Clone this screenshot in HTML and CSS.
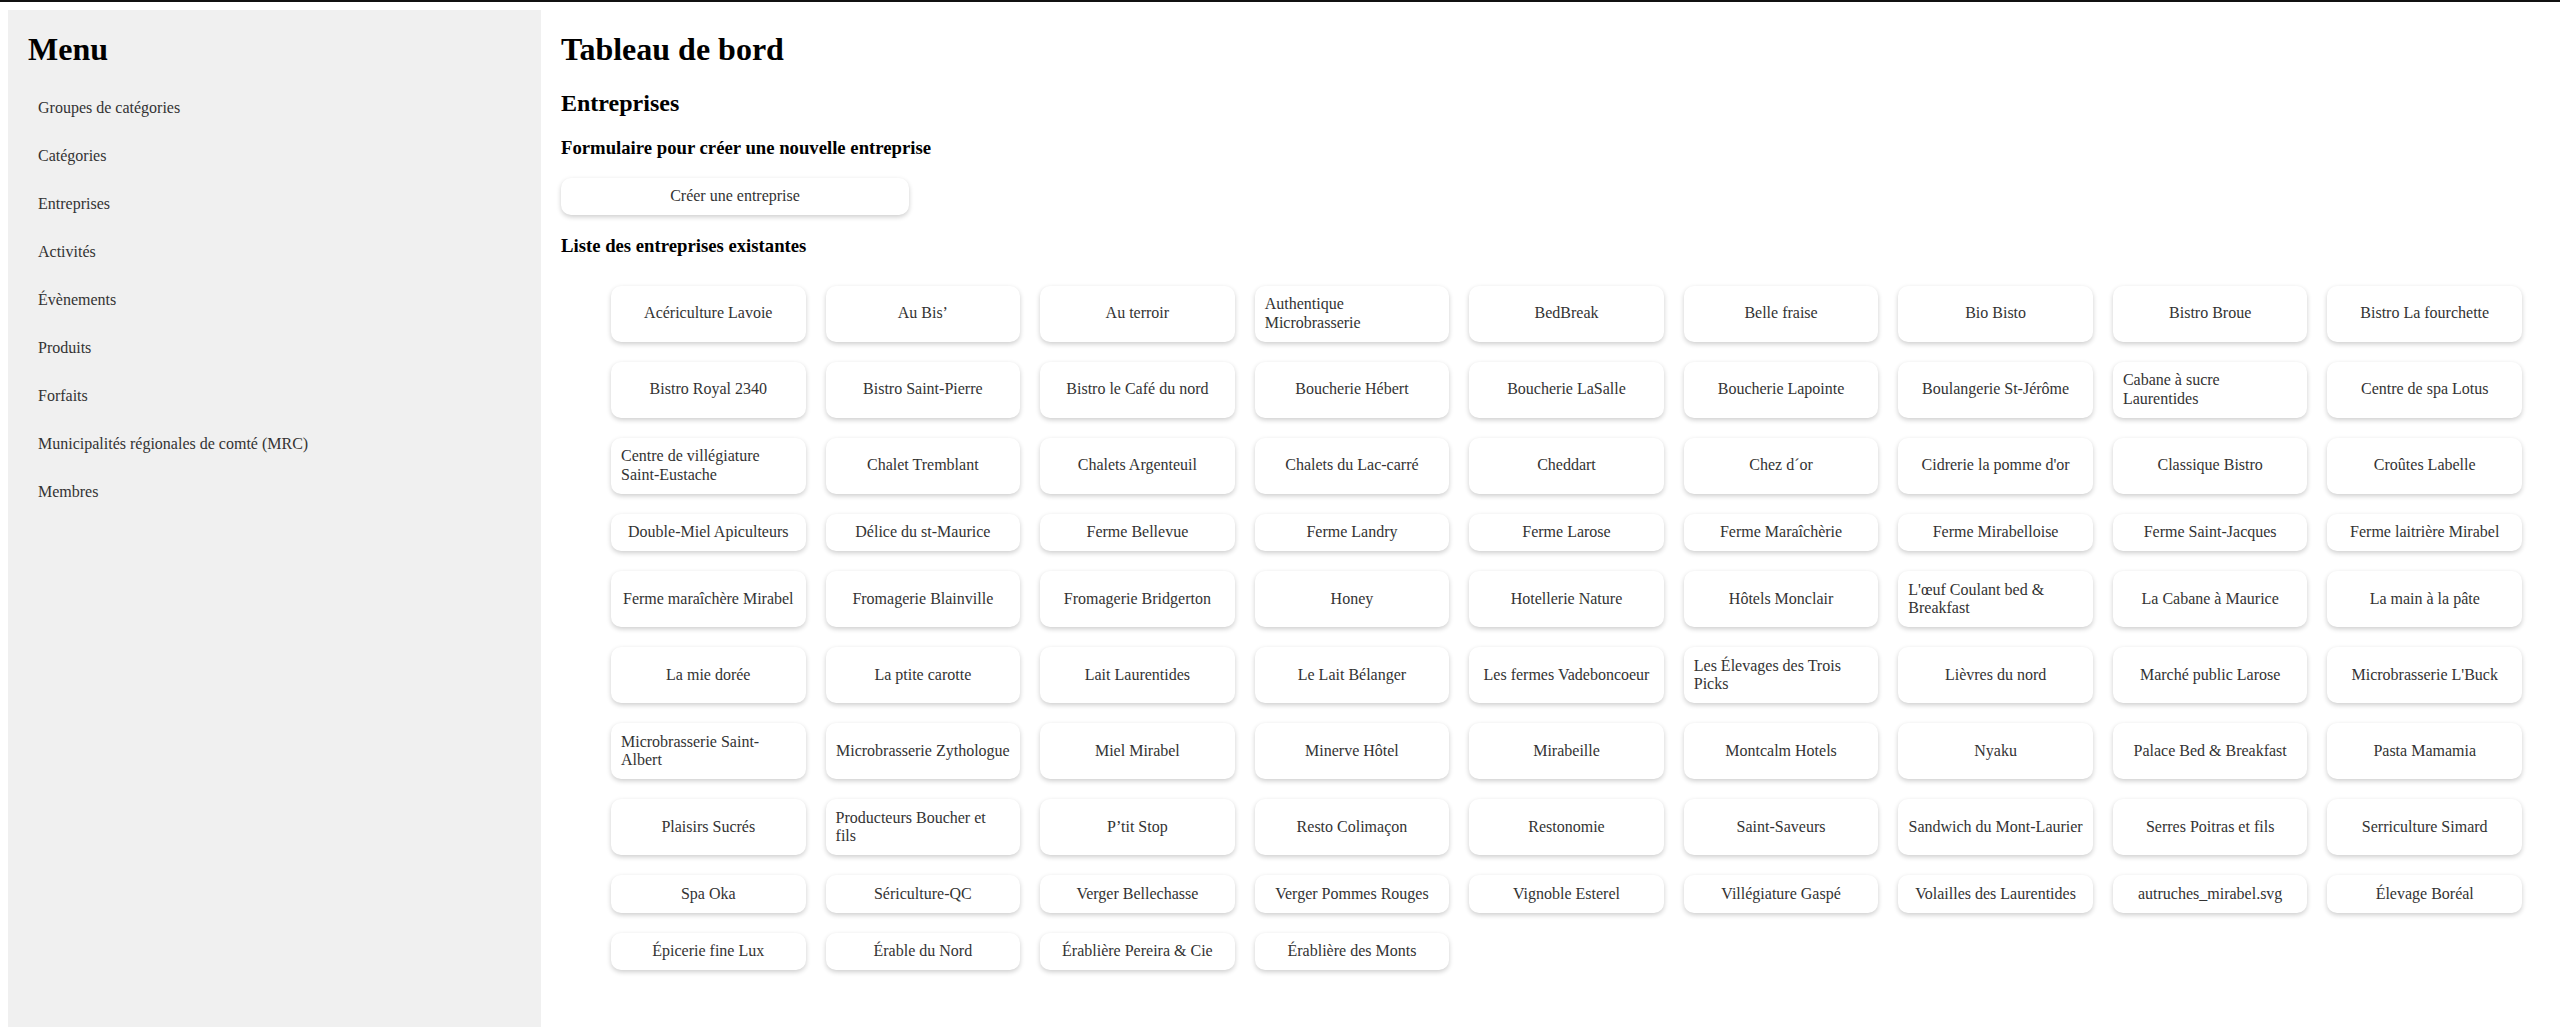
FILE: index.html
```html
<!DOCTYPE html>
<html lang="fr">
<head>
<meta charset="utf-8">
<title>Tableau de bord</title>
<link rel="stylesheet" href="styles.css">
</head>
<body>
<div class="layout">
  <nav class="sidebar">
    <h1>Menu</h1>
    <ul class="menu">
      <li><a href="#">Groupes de catégories</a></li>
      <li><a href="#">Catégories</a></li>
      <li><a href="#">Entreprises</a></li>
      <li><a href="#">Activités</a></li>
      <li><a href="#">Évènements</a></li>
      <li><a href="#">Produits</a></li>
      <li><a href="#">Forfaits</a></li>
      <li><a href="#">Municipalités régionales de comté (MRC)</a></li>
      <li><a href="#">Membres</a></li>
    </ul>
  </nav>
  <main class="main">
    <h1>Tableau de bord</h1>
    <h2>Entreprises</h2>
    <h3>Formulaire pour créer une nouvelle entreprise</h3>
    <div class="create-btn">Créer une entreprise</div>
    <h3>Liste des entreprises existantes</h3>
    <ul class="grid">
      <li class="card">Acériculture Lavoie</li>
      <li class="card">Au Bis’</li>
      <li class="card">Au terroir</li>
      <li class="card">Authentique Microbrasserie</li>
      <li class="card">BedBreak</li>
      <li class="card">Belle fraise</li>
      <li class="card">Bio Bisto</li>
      <li class="card">Bistro Broue</li>
      <li class="card">Bistro La fourchette</li>
      <li class="card">Bistro Royal 2340</li>
      <li class="card">Bistro Saint-Pierre</li>
      <li class="card">Bistro le Café du nord</li>
      <li class="card">Boucherie Hébert</li>
      <li class="card">Boucherie LaSalle</li>
      <li class="card">Boucherie Lapointe</li>
      <li class="card">Boulangerie St-Jérôme</li>
      <li class="card">Cabane à sucre Laurentides</li>
      <li class="card">Centre de spa Lotus</li>
      <li class="card">Centre de villégiature Saint-Eustache</li>
      <li class="card">Chalet Tremblant</li>
      <li class="card">Chalets Argenteuil</li>
      <li class="card">Chalets du Lac-carré</li>
      <li class="card">Cheddart</li>
      <li class="card">Chez d´or</li>
      <li class="card">Cidrerie la pomme d'or</li>
      <li class="card">Classique Bistro</li>
      <li class="card">Croûtes Labelle</li>
      <li class="card">Double-Miel Apiculteurs</li>
      <li class="card">Délice du st-Maurice</li>
      <li class="card">Ferme Bellevue</li>
      <li class="card">Ferme Landry</li>
      <li class="card">Ferme Larose</li>
      <li class="card">Ferme Maraîchèrie</li>
      <li class="card">Ferme Mirabelloise</li>
      <li class="card">Ferme Saint-Jacques</li>
      <li class="card">Ferme laitrière Mirabel</li>
      <li class="card">Ferme maraîchère Mirabel</li>
      <li class="card">Fromagerie Blainville</li>
      <li class="card">Fromagerie Bridgerton</li>
      <li class="card">Honey</li>
      <li class="card">Hotellerie Nature</li>
      <li class="card">Hôtels Monclair</li>
      <li class="card">L'œuf Coulant bed &amp; Breakfast</li>
      <li class="card">La Cabane à Maurice</li>
      <li class="card">La main à la pâte</li>
      <li class="card">La mie dorée</li>
      <li class="card">La ptite carotte</li>
      <li class="card">Lait Laurentides</li>
      <li class="card">Le Lait Bélanger</li>
      <li class="card">Les fermes Vadeboncoeur</li>
      <li class="card">Les Élevages des Trois Picks</li>
      <li class="card">Lièvres du nord</li>
      <li class="card">Marché public Larose</li>
      <li class="card">Microbrasserie L'Buck</li>
      <li class="card">Microbrasserie Saint-Albert</li>
      <li class="card">Microbrasserie Zythologue</li>
      <li class="card">Miel Mirabel</li>
      <li class="card">Minerve Hôtel</li>
      <li class="card">Mirabeille</li>
      <li class="card">Montcalm Hotels</li>
      <li class="card">Nyaku</li>
      <li class="card">Palace Bed &amp; Breakfast</li>
      <li class="card">Pasta Mamamia</li>
      <li class="card">Plaisirs Sucrés</li>
      <li class="card">Producteurs Boucher et fils</li>
      <li class="card">P’tit Stop</li>
      <li class="card">Resto Colimaçon</li>
      <li class="card">Restonomie</li>
      <li class="card">Saint-Saveurs</li>
      <li class="card">Sandwich du Mont-Laurier</li>
      <li class="card">Serres Poitras et fils</li>
      <li class="card">Serriculture Simard</li>
      <li class="card">Spa Oka</li>
      <li class="card">Sériculture-QC</li>
      <li class="card">Verger Bellechasse</li>
      <li class="card">Verger Pommes Rouges</li>
      <li class="card">Vignoble Esterel</li>
      <li class="card">Villégiature Gaspé</li>
      <li class="card">Volailles des Laurentides</li>
      <li class="card">autruches_mirabel.svg</li>
      <li class="card">Élevage Boréal</li>
      <li class="card">Épicerie fine Lux</li>
      <li class="card">Érable du Nord</li>
      <li class="card">Érablière Pereira &amp; Cie</li>
      <li class="card">Érablière des Monts</li>
    </ul>
  </main>
</div>
</body>
</html>
```

FILE: styles.css
```css
html {
  border-top: 2px solid #111;
}

body {
  margin: 8px;
  font-family: "Liberation Serif", "Times New Roman", serif;
  color: #000;
  background: #fff;
}

.layout {
  display: flex;
  min-height: 100vh;
}

.sidebar {
  width: 533px;
  flex: 0 0 533px;
  box-sizing: border-box;
  padding: 0 20px;
  background: #f0f0f0;
}

.sidebar h1 {
  font-size: 32px;
  margin: 21.44px 0;
}

.menu {
  list-style: none;
  margin: 16px 0;
  padding: 0;
}

.menu li {
  margin-bottom: 12px;
}

.menu a {
  display: block;
  padding: 9px 10px;
  font-size: 16px;
  color: #333;
  text-decoration: none;
}

.main {
  flex: 1;
  min-width: 0;
  padding: 0 20px;
}

.main h1 {
  font-size: 32px;
  margin: 21.44px 0;
}

.main h2 {
  font-size: 24px;
  margin: 19.92px 0;
}

.main h3 {
  font-size: 18.72px;
  margin: 18.72px 0;
}

.create-btn {
  width: 348px;
  box-sizing: border-box;
  padding: 9.5px 10px;
  line-height: 18.5px;
  font-size: 16px;
  text-align: center;
  color: #333;
  background: #fff;
  border-radius: 10px;
  box-shadow: 0 2px 5px rgba(0, 0, 0, 0.2);
  margin-bottom: 20px;
}

.grid {
  list-style: none;
  margin: 16px 0;
  padding: 0 0 0 40px;
  display: grid;
  grid-template-columns: repeat(9, minmax(0, 1fr));
}

.card {
  margin: 10px;
  padding: 9.5px 10px;
  display: flex;
  justify-content: center;
  align-items: center;
  font-size: 16px;
  line-height: 18.5px;
  color: #333;
  background: #fff;
  border-radius: 10px;
  box-shadow: 0 2px 5px rgba(0, 0, 0, 0.2);
}
```
